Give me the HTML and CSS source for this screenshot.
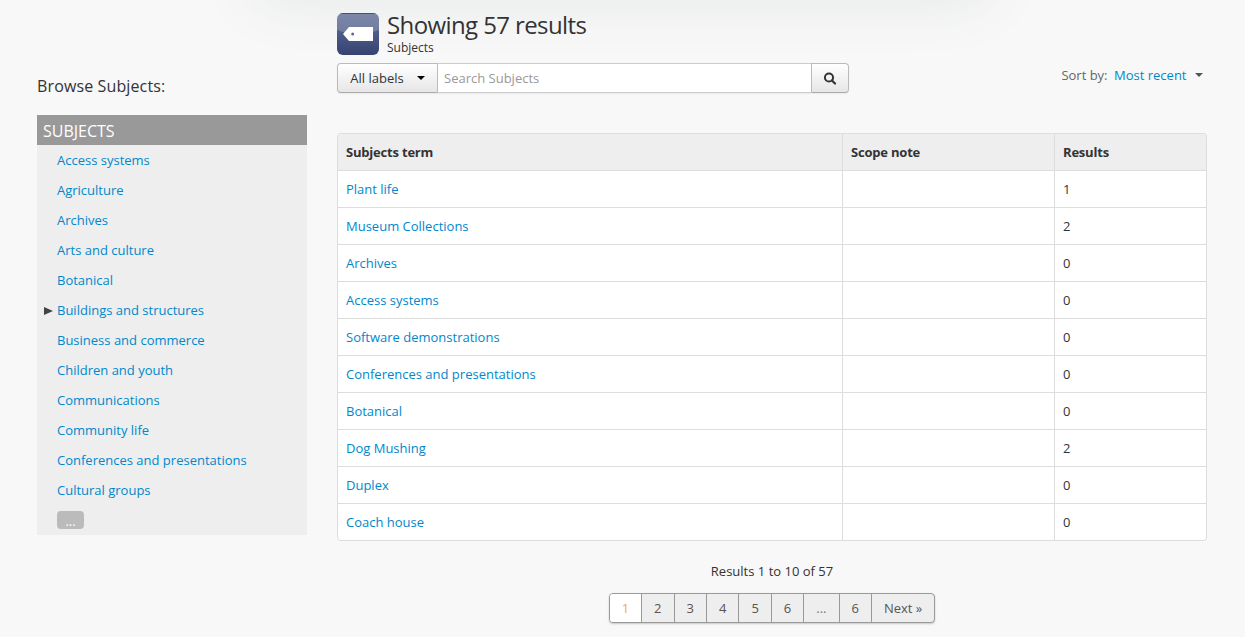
FILE: index.html
```
<!DOCTYPE html>
<html lang="en">
<head>
<meta charset="utf-8">
<title>Subjects</title>
<link rel="stylesheet" href="styles.css">
</head>
<body>
<div class="page">
  <aside class="sidebar">
    <h2 class="browse-title">Browse Subjects:</h2>
    <ul class="tree">
      <li class="tree-root">SUBJECTS</li>
      <li><a>Access systems</a></li>
      <li><a>Agriculture</a></li>
      <li><a>Archives</a></li>
      <li><a>Arts and culture</a></li>
      <li><a>Botanical</a></li>
      <li class="expandable"><a>Buildings and structures</a></li>
      <li><a>Business and commerce</a></li>
      <li><a>Children and youth</a></li>
      <li><a>Communications</a></li>
      <li><a>Community life</a></li>
      <li><a>Conferences and presentations</a></li>
      <li><a>Cultural groups</a></li>
      <li class="tree-more"><span class="more">...</span></li>
    </ul>
  </aside>
  <main class="main">
    <header class="heading">
      <svg class="heading-icon" width="42" height="42" viewBox="0 0 42 42">
        <defs>
          <linearGradient id="tile" x1="0" y1="0" x2="0" y2="1">
            <stop offset="0" stop-color="#5d6a94"/>
            <stop offset="0.5" stop-color="#4c5a88"/>
            <stop offset="1" stop-color="#36426f"/>
          </linearGradient>
          <clipPath id="round"><rect width="42" height="42" rx="6"/></clipPath>
        </defs>
        <g clip-path="url(#round)">
          <rect width="42" height="42" fill="url(#tile)"/>
          <path d="M0 0H42V17Q21 25 0 17Z" fill="#fff" opacity=".2"/>
          <path d="M0 .5H42" stroke="#2f3a66" stroke-opacity=".7"/>
        </g>
        <path d="M6 21L12 14H36V28H12Z" fill="#fff"/>
        <circle cx="15.7" cy="21" r="1.5" fill="#5c6890"/>
      </svg>
      <div>
        <h1 class="title">Showing 57 results</h1>
        <div class="subtitle">Subjects</div>
      </div>
    </header>
    <div class="toolbar">
      <div class="search">
        <button class="labels-btn">All labels<span class="caret"></span></button>
        <input class="search-input" type="text" placeholder="Search Subjects">
        <button class="search-btn" aria-label="Search">
          <svg width="14" height="14" viewBox="0 0 14 14"><circle cx="6" cy="6.5" r="4.1" fill="none" stroke="#333" stroke-width="2"/><path d="M9 9.5L12 12.5" stroke="#333" stroke-width="2.2" stroke-linecap="round"/></svg>
        </button>
      </div>
      <div class="sort">Sort by:<a>Most recent</a><span class="caret"></span></div>
    </div>
    <table class="results">
      <thead><tr><th class="col-term">Subjects term</th><th class="col-note">Scope note</th><th>Results</th></tr></thead>
      <tbody>
        <tr><td><a>Plant life</a></td><td></td><td>1</td></tr>
        <tr><td><a>Museum Collections</a></td><td></td><td>2</td></tr>
        <tr><td><a>Archives</a></td><td></td><td>0</td></tr>
        <tr><td><a>Access systems</a></td><td></td><td>0</td></tr>
        <tr><td><a>Software demonstrations</a></td><td></td><td>0</td></tr>
        <tr><td><a>Conferences and presentations</a></td><td></td><td>0</td></tr>
        <tr><td><a>Botanical</a></td><td></td><td>0</td></tr>
        <tr><td><a>Dog Mushing</a></td><td></td><td>2</td></tr>
        <tr><td><a>Duplex</a></td><td></td><td>0</td></tr>
        <tr><td><a>Coach house</a></td><td></td><td>0</td></tr>
      </tbody>
    </table>
    <div class="count">Results 1 to 10 of 57</div>
    <nav class="pagination">
      <ul>
        <li class="active">1</li><li>2</li><li>3</li><li>4</li><li>5</li><li>6</li><li class="dots">...</li><li>6</li><li>Next »</li>
      </ul>
    </nav>
  </main>
</div>
</body>
</html>
```
FILE: styles.css
```
* { box-sizing: border-box; }
body {
  margin: 0;
  height: 637px;
  overflow: hidden;
  background: #f8f8f8;
  color: #333;
  font: 13px/20px "Open Sans", "Noto Sans", sans-serif;
}
h1, h2, ul { margin: 0; padding: 0; font-weight: 400; list-style: none; }
a { color: #08c; text-decoration: none; }
/* Soft shadow falling from the top edge */
body::before {
  content: "";
  position: absolute;
  z-index: -1;
  top: -60px;
  left: 250px;
  width: 744px;
  height: 60px;
  border-radius: 30px;
  box-shadow: 0 0 60px rgba(60,80,80,.11);
}
.page { display: flex; gap: 30px; padding: 0 38px 0 37px; }
.sidebar { width: 270px; flex: none; padding-top: 71px; }
.browse-title { font-size: 16px; line-height: 30px; margin-bottom: 14px; letter-spacing: .13px; }
.tree { background: #eee; }
.tree li { height: 30px; line-height: 30px; padding-left: 20px; }
.tree .tree-root { background: #999; color: #fff; font-size: 16px; line-height: 32px; padding-left: 6px; }
.tree .expandable { display: flex; align-items: center; padding-left: 7px; }
.expandable::before {
  content: "";
  border: solid transparent;
  border-width: 4px 0 4px 9px;
  border-left-color: #444;
  margin: 1px 4px 0 0;
}
.tree .tree-more { display: flex; align-items: center; }
.more { width: 27px; height: 18px; border-radius: 4px; background: #bbb; color: #fff; text-align: center; line-height: 20px; }

.main { width: 870px; flex: none; }
.heading { display: flex; gap: 8px; height: 63px; padding-top: 13px; }
.heading-icon { display: block; flex: none; }
.title { font-size: 24px; line-height: 26px; margin-top: -1px; letter-spacing: -.6px; }
.subtitle { font-size: 12px; line-height: 16px; margin-top: 2px; }
.toolbar { display: flex; justify-content: space-between; height: 70px; }
.search { display: flex; width: 512px; height: 30px; border-radius: 4px; box-shadow: 0 1px 2px rgba(0,0,0,.06); }
.search button {
  display: flex;
  align-items: center;
  justify-content: center;
  margin: 0;
  padding: 0;
  border: 1px solid #bbb;
  border-bottom-color: #aaa;
  background: linear-gradient(#fff, #e6e6e6);
  font: inherit;
  color: #333;
}
.search .labels-btn { width: 101px; border-radius: 4px 0 0 4px; gap: 13px; }
.search .search-btn { width: 38px; border-radius: 0 4px 4px 0; }
.search-input { flex: 1; min-width: 0; padding: 0 6px; border: solid #ccc; border-width: 1px 0; background: #fff; font: inherit; }
.search-input::placeholder { color: #999; opacity: 1; }
.caret { border: solid transparent; border-width: 4px 4px 0; border-top-color: #000; }
.sort { display: flex; align-items: center; height: 24px; padding-right: 4px; color: #666; }
.sort a { margin: 0 8.5px 0 6.5px; }
.sort .caret { border-top-color: #555; }

.results {
  width: 870px;
  table-layout: fixed;
  border-collapse: separate;
  border-spacing: 0;
  border: 1px solid #ddd;
  border-left: 0;
  border-radius: 4px;
  background: #fff;
  overflow: hidden;
}
.results th, .results td { height: 37px; padding: 8px; line-height: 20px; text-align: left; border-left: 1px solid #ddd; border-top: 1px solid #ddd; }
.results th { height: 36px; border-top: 0; background: #eee; font-weight: 700; letter-spacing: -.2px; }
.results th:first-child { border-top-left-radius: 4px; }
.results tr:last-child td:first-child { border-bottom-left-radius: 4px; }
.col-term { width: 505px; }
.col-note { width: 212px; }
.count { margin-top: 20px; text-align: center; }
.pagination { display: flex; justify-content: center; margin-top: 12px; }
.pagination ul { display: flex; border: 1px solid #999; border-radius: 4px; background: #eee; box-shadow: 0 1px 2px rgba(0,0,0,.2); overflow: hidden; }
.pagination li { height: 28px; line-height: 28px; padding: 0 12px; color: #555; border-left: 1px solid #999; }
.pagination .active { background: #fff; color: #f4a847; border-left: 0; }
.pagination .dots { color: #777; }
```
